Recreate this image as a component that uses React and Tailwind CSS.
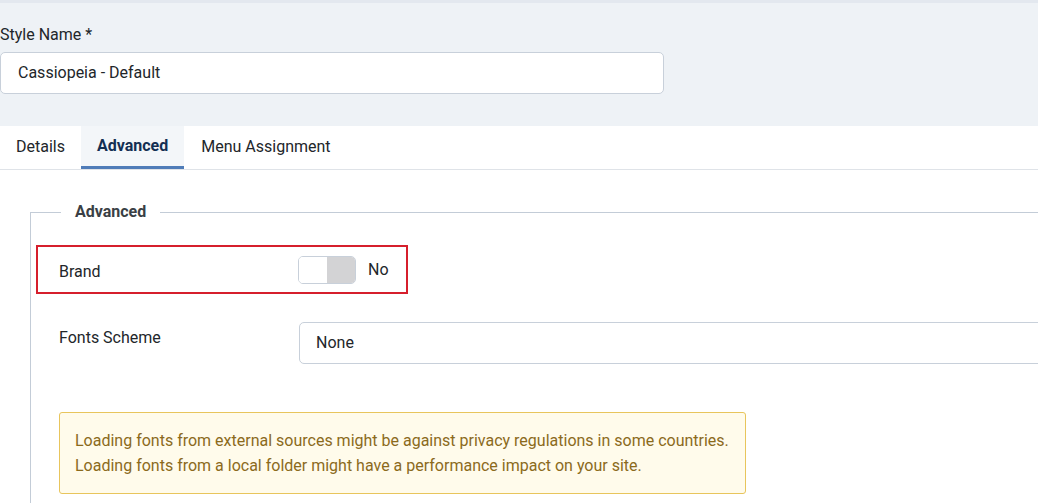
export default function App() {
  return (
    <div className="w-[1038px] h-[503px] overflow-hidden bg-white text-[#22262a] font-['Roboto',sans-serif]">
      {/* Top area */}
      <div className="bg-[#eef2f6] h-[126px] pt-[3px] border-t-[3px] border-[#e3e8ef]">
        <div className="pt-[20px] text-[16px] leading-[18px] text-[#22262a]">Style Name *</div>
        <div className="mt-[8px] w-[664px] h-[42px] bg-white border border-[#c8d0da] rounded-[5px] flex items-center pl-[17px] text-[16px]">
          Cassiopeia - Default
        </div>
      </div>

      {/* Tabs */}
      <div className="flex h-[44px] border-b border-[#dfe3e8]">
        <div className="px-[16px] flex items-center h-[41px] text-[16px] text-[#22262a]">Details</div>
        <div className="px-[16px] flex items-center h-[43px] bg-[#f3f6f9] border-b-[3px] border-[#4f7cb8] text-[16px] font-bold text-[#132f53]">
          Advanced
        </div>
        <div className="px-[17px] flex items-center h-[41px] text-[16px] text-[#22262a]">Menu Assignment</div>
      </div>

      {/* Fieldset */}
      <div className="pl-[30px] pt-[33px]">
        <fieldset className="border-l border-t border-[#c3ccd7] pl-[5px] pt-0 h-[400px]">
          <legend className="ml-[25px] px-[14px] text-[16px] font-bold text-[#3a3f45] leading-[18px]">Advanced</legend>

          <div className="mt-[24px] w-[372px] h-[49px] border-2 border-[#d61f2c] flex items-center">
            <div className="w-[260px] pl-[21px] pt-[5px] text-[16px] text-[#22262a]">Brand</div>
            <div className="flex w-[58px] h-[28px] rounded-[5px] border border-[#c8d0da] overflow-hidden">
              <div className="w-1/2 bg-white" />
              <div className="w-1/2 bg-[#d3d3d5]" />
            </div>
            <div className="ml-[12px] text-[16px] text-[#22262a]">No</div>
          </div>

          <div className="mt-[28px] flex">
            <div className="w-[263px] pl-[23px] pt-[4px] text-[16px] text-[#22262a]">Fonts Scheme</div>
            <div className="flex-1 h-[42px] mr-[-20px] border border-[#c8d0da] rounded-[5px] flex items-center pl-[16px] text-[16px] bg-white">
              None
            </div>
          </div>

          <div className="mt-[48px] ml-[23px] w-[687px] h-[82px] bg-[#fffbeb] border border-[#e8c55c] rounded-[3px] pl-[15px] pt-[15px] text-[16px] leading-[25px] text-[#8b6a1c]">
            <div>Loading fonts from external sources might be against privacy regulations in some countries.</div>
            <div>Loading fonts from a local folder might have a performance impact on your site.</div>
          </div>
        </fieldset>
      </div>
    </div>
  );
}
